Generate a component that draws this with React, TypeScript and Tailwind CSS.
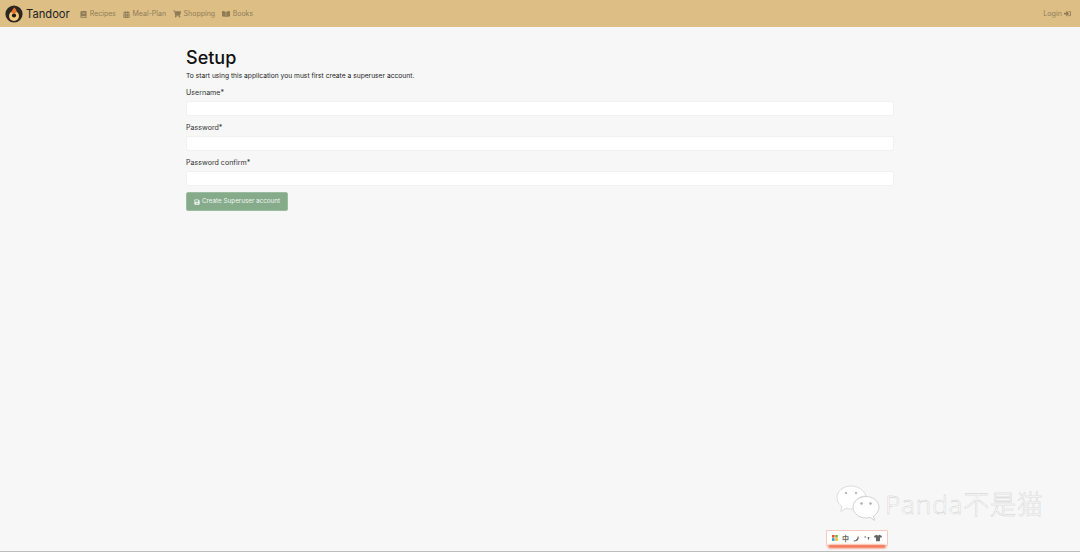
import { FaBook, FaCalendarAlt, FaShoppingCart, FaBookOpen, FaSignInAlt, FaSave, FaTshirt } from "react-icons/fa";

const font = { fontFamily: "Inter, 'Noto Sans', sans-serif" };

function NavItem({ icon, label }: { icon: React.ReactNode; label: string }) {
  return (
    <a className="flex items-center gap-[3px] text-[7px] text-[#8f7c57]">
      {icon}
      <span>{label}</span>
    </a>
  );
}

function Field({ label }: { label: string }) {
  return (
    <div className="mb-[6px]">
      <label className="block h-[14px] text-[7.1px] leading-[11px] text-[#333]">{label}</label>
      <div className="h-[15px] rounded-[2px] border border-[#f1f1f1] bg-white" />
    </div>
  );
}

function Logo() {
  return (
    <svg width="18" height="18" viewBox="0 0 18 18">
      <circle cx="9" cy="9" r="8.6" fill="#2b2622" />
      <circle cx="9" cy="11" r="5" fill="#f3c77a" />
      <path d="M9 2.500c2.400 1.600 3 3.600 2.200 5.200-.6 1.100-3.800 1.100-4.400 0C6 6.200 7.500 5.400 9 2.500z" fill="#e8762b" />
      <circle cx="9" cy="10.500" r="2.100" fill="#1d1a18" />
    </svg>
  );
}

function WeChat() {
  return (
    <svg width="44" height="38" viewBox="0 0 44 38">
      <path d="M15 1C7 1 1 6.200 1 12.500c0 3.700 2 6.800 5 9l-1.200 4.800 5.400-3c1.600.5 3.200.8 4.800.8 1 0 2-.1 3-.3C17 16 23 11 30 11c-1.500-5.800-8-10-15-10z" fill="#fff" stroke="#d4d4d4" strokeWidth="0.8" />
      <path d="M30 11.500c-7 0-13 4.700-13 10.700s6 10.800 13 10.800c1.400 0 2.800-.2 4-.6l4.600 3-1.100-4.400c3.400-2 5.500-5.300 5.500-8.800 0-6-6-10.700-13-10.700z" fill="#fff" stroke="#c8c8c8" strokeWidth="0.8" />
      <circle cx="10" cy="8" r="1.200" fill="#bbb" />
      <circle cx="20" cy="8" r="1.200" fill="#bbb" />
      <circle cx="25.500" cy="18.500" r="1.200" fill="#aaa" />
      <circle cx="34.500" cy="18.500" r="1.200" fill="#aaa" />
    </svg>
  );
}

export default function App() {
  return (
    <div className="relative h-[552px] w-[1080px] overflow-hidden bg-[#f7f7f7] antialiased" style={font}>
      <nav className="flex h-[27px] items-center bg-[#ddbf86] pl-[5px] pr-[9px] pt-[1px]">
        <Logo />
        <span className="ml-[3px] text-[11.2px] text-[#222]">Tandoor</span>
        <div className="ml-[10px] flex items-center gap-[6.5px]">
          <NavItem icon={<FaBook size={7} />} label="Recipes" />
          <NavItem icon={<FaCalendarAlt size={7} />} label="Meal-Plan" />
          <NavItem icon={<FaShoppingCart size={8} />} label="Shopping" />
          <NavItem icon={<FaBookOpen size={8} />} label="Books" />
        </div>
        <a className="ml-auto flex items-center gap-[2px] text-[7.2px] text-[#8f7c57]">
          Login <FaSignInAlt size={7} />
        </a>
      </nav>

      <main className="mx-auto w-[708px] pt-[21px]">
        <h1 className="text-[18px] font-medium leading-[20px] text-[#111]">Setup</h1>
        <p className="mt-[3px] mb-[6px] text-[6.7px] leading-[10px] text-[#222]">
          To start using this application you must first create a superuser account.
        </p>
        <Field label="Username*" />
        <Field label="Password*" />
        <Field label="Password confirm*" />
        <button className="flex h-[19px] w-[102px] items-center justify-center gap-[2px] rounded-[2px] border border-[#9cbca0] bg-[#85ab8a] pt-[1px] text-[6.3px] text-[#f2f6f2]">
          <FaSave size={6} />
          Create Superuser account
        </button>
      </main>

      <div className="absolute left-[836px] top-[484px] flex items-center">
        <WeChat />
        <span
          className="ml-[5px] pt-[1px] text-[26px] font-light tracking-[0.8px] text-white"
          style={{ fontFamily: "'Noto Sans', 'Noto Sans CJK SC', sans-serif", WebkitTextStroke: "0.4px #cccccc" }}
        >
          Panda不是猫
        </span>
      </div>

      <div className="absolute left-[826px] top-[530px] flex h-[16px] w-[62px] items-center justify-center gap-[4px] rounded-[1px] border border-[#f6c9bd] bg-white text-[#666]">
        <svg width="6" height="6" viewBox="0 0 6 6">
          <rect width="2.600" height="2.600" fill="#e8503a" />
          <rect x="3.200" width="2.600" height="2.600" fill="#76b82a" />
          <rect y="3.200" width="2.600" height="2.600" fill="#2d9cdb" />
          <rect x="3.200" y="3.200" width="2.600" height="2.600" fill="#f5b915" />
        </svg>
        <span className="text-[7px] font-bold leading-none" style={{ fontFamily: "'Noto Sans CJK SC', sans-serif" }}>中</span>
        <svg width="7" height="7" viewBox="0 0 7 7"><path d="M5 .5C6.500 3 5.500 6.500 1 6.500 .5 6 .5 5.500 1 5.500 3 5.500 4.500 4 5 .5z" fill="#666" /></svg>
        <svg width="6" height="7" viewBox="0 0 6 7"><circle cx="1.200" cy="2" r="0.800" fill="#666" /><path d="M3.500 2h2L4.500 5.500z" fill="#666" /></svg>
        <FaTshirt size={8} />
      </div>
      <div className="absolute left-[828px] top-[545px] h-[3px] w-[58px] rounded-full bg-[#f4603a] blur-[1px]" />
      <div className="absolute bottom-0 left-0 h-px w-full bg-[#bdbdbd]" />
    </div>
  );
}
